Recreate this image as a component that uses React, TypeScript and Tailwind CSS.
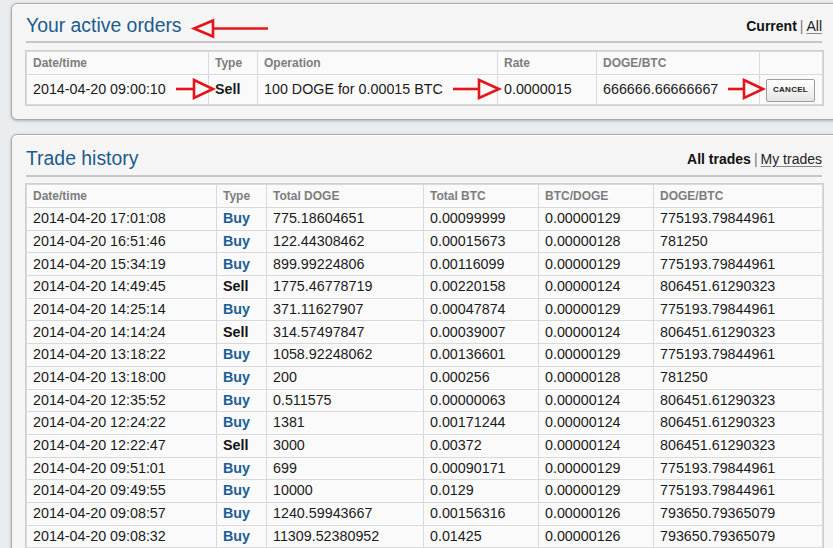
import React from "react";

type Trade = [string, "Buy" | "Sell", string, string, string, string];

const trades: Trade[] = [
  ["2014-04-20 17:01:08", "Buy", "775.18604651", "0.00099999", "0.00000129", "775193.79844961"],
  ["2014-04-20 16:51:46", "Buy", "122.44308462", "0.00015673", "0.00000128", "781250"],
  ["2014-04-20 15:34:19", "Buy", "899.99224806", "0.00116099", "0.00000129", "775193.79844961"],
  ["2014-04-20 14:49:45", "Sell", "1775.46778719", "0.00220158", "0.00000124", "806451.61290323"],
  ["2014-04-20 14:25:14", "Buy", "371.11627907", "0.00047874", "0.00000129", "775193.79844961"],
  ["2014-04-20 14:14:24", "Sell", "314.57497847", "0.00039007", "0.00000124", "806451.61290323"],
  ["2014-04-20 13:18:22", "Buy", "1058.92248062", "0.00136601", "0.00000129", "775193.79844961"],
  ["2014-04-20 13:18:00", "Buy", "200", "0.000256", "0.00000128", "781250"],
  ["2014-04-20 12:35:52", "Buy", "0.511575", "0.00000063", "0.00000124", "806451.61290323"],
  ["2014-04-20 12:24:22", "Buy", "1381", "0.00171244", "0.00000124", "806451.61290323"],
  ["2014-04-20 12:22:47", "Sell", "3000", "0.00372", "0.00000124", "806451.61290323"],
  ["2014-04-20 09:51:01", "Buy", "699", "0.00090171", "0.00000129", "775193.79844961"],
  ["2014-04-20 09:49:55", "Buy", "10000", "0.0129", "0.00000129", "775193.79844961"],
  ["2014-04-20 09:08:57", "Buy", "1240.59943667", "0.00156316", "0.00000126", "793650.79365079"],
  ["2014-04-20 09:08:32", "Buy", "11309.52380952", "0.01425", "0.00000126", "793650.79365079"],
];

const th = "border border-[#d9d9d9] px-[6px] text-left align-middle text-[12px] font-bold text-[#7d7d7d]";
const td = "border border-[#d9d9d9] px-[6px] text-left align-middle text-[14.3px] text-[#1a1a1a] whitespace-nowrap";

function Arrow({ tail, tip, base, y, half }: { tail: number; tip: number; base: number; y: number; half: number }) {
  return (
    <g stroke="#e3141b" strokeWidth={2.6} fill="none" strokeLinejoin="miter">
      <line x1={tail} y1={y} x2={base} y2={y} />
      <polygon points={`${base},${y - half} ${tip},${y} ${base},${y + half}`} />
    </g>
  );
}

export default function App() {
  return (
    <div className="relative w-[833px] h-[548px] overflow-hidden bg-[#e9edf0] pl-[11px] pt-[3px] font-['Liberation_Sans',Arial,sans-serif]">
      <div className="flex flex-col gap-[14px]">
        {/* Active orders panel */}
        <div className="w-[840px] rounded-[6px] border border-[#aaaaaa] bg-[#f5f5f5] pl-[14px] pt-[10px] pb-[14px] shadow-[0_1px_3px_rgba(0,0,0,0.25),inset_0_1px_0_#ffffff]">
          <div className="w-[796px]">
            <div className="flex items-end justify-between border-b-2 border-[#c6c6c6] pb-[5px]">
              <h2 className="text-[19.4px] leading-[22px] text-[#1c5b8d] font-normal">Your active orders</h2>
              <div className="text-[14px] leading-[18px] text-[#222] mb-[1px]">
                <span className="font-bold text-[#111]">Current</span>
                <span className="text-[#777] px-[3px]">|</span>
                <span className="underline decoration-[#888] underline-offset-2">All</span>
              </div>
            </div>
            <table className="mt-[8px] w-[796px] table-fixed border-collapse bg-[#fafafa] outline outline-1 outline-[#cfcfcf]">
              <colgroup>
                <col className="w-[182px]" />
                <col className="w-[49px]" />
                <col className="w-[240px]" />
                <col className="w-[99px]" />
                <col className="w-[163px]" />
                <col className="w-[63px]" />
              </colgroup>
              <thead>
                <tr className="h-[23px]">
                  <th className={th}>Date/time</th>
                  <th className={th}>Type</th>
                  <th className={th}>Operation</th>
                  <th className={th}>Rate</th>
                  <th className={th}>DOGE/BTC</th>
                  <th className={th}></th>
                </tr>
              </thead>
              <tbody>
                <tr className="h-[30px]">
                  <td className={td}>2014-04-20 09:00:10</td>
                  <td className={td + " font-bold"}>Sell</td>
                  <td className={td}>100 DOGE for 0.00015 BTC</td>
                  <td className={td}>0.0000015</td>
                  <td className={td}>666666.66666667</td>
                  <td className={td}>
                    <button className="h-[23px] w-[49px] rounded-[2px] border border-[#9c9c9c] bg-gradient-to-b from-[#ffffff] to-[#e6e6e6] text-[8px] font-bold tracking-[0.3px] text-[#222] shadow-[inset_0_1px_0_#fff]">
                      CANCEL
                    </button>
                  </td>
                </tr>
              </tbody>
            </table>
          </div>
        </div>

        {/* Trade history panel */}
        <div className="w-[840px] rounded-[6px] border border-[#aaaaaa] bg-[#f5f5f5] pl-[14px] pt-[12px] pb-[14px] shadow-[0_1px_3px_rgba(0,0,0,0.25),inset_0_1px_0_#ffffff]">
          <div className="w-[796px]">
            <div className="flex items-end justify-between border-b-2 border-[#c6c6c6] pb-[6px]">
              <h2 className="text-[19.4px] leading-[22px] text-[#1c5b8d] font-normal">Trade history</h2>
              <div className="text-[14px] leading-[18px] text-[#222] mb-[1px]">
                <span className="font-bold text-[#111]">All trades</span>
                <span className="text-[#777] px-[3px]">|</span>
                <span className="underline decoration-[#888] underline-offset-2">My trades</span>
              </div>
            </div>
            <table className="mt-[7px] w-[796px] table-fixed border-collapse bg-[#fafafa] outline outline-1 outline-[#cfcfcf]">
              <colgroup>
                <col className="w-[190px]" />
                <col className="w-[50px]" />
                <col className="w-[157px]" />
                <col className="w-[115px]" />
                <col className="w-[115px]" />
                <col className="w-[169px]" />
              </colgroup>
              <thead>
                <tr className="h-[23px]">
                  <th className={th}>Date/time</th>
                  <th className={th}>Type</th>
                  <th className={th}>Total DOGE</th>
                  <th className={th}>Total BTC</th>
                  <th className={th}>BTC/DOGE</th>
                  <th className={th}>DOGE/BTC</th>
                </tr>
              </thead>
              <tbody>
                {trades.map((t, i) => (
                  <tr key={i} className="h-[22.7px]">
                    <td className={td}>{t[0]}</td>
                    <td className={td + (t[1] === "Buy" ? " font-bold text-[#1b5e94]" : " font-bold text-[#111]")}>{t[1]}</td>
                    <td className={td}>{t[2]}</td>
                    <td className={td}>{t[3]}</td>
                    <td className={td}>{t[4]}</td>
                    <td className={td}>{t[5]}</td>
                  </tr>
                ))}
                <tr className="h-[22.7px]">
                  <td className={td}></td>
                  <td className={td}></td>
                  <td className={td}></td>
                  <td className={td}></td>
                  <td className={td}></td>
                  <td className={td}></td>
                </tr>
              </tbody>
            </table>
          </div>
        </div>
      </div>

      {/* Red annotation arrows */}
      <svg className="pointer-events-none absolute left-0 top-0" width={833} height={548} viewBox="0 0 833 548">
        <Arrow tail={268} tip={194} base={213} y={28.5} half={8} />
        <Arrow tail={176} tip={213} base={194} y={89} half={9} />
        <Arrow tail={453} tip={499} base={479} y={89} half={9} />
        <Arrow tail={728} tip={763} base={744} y={89} half={9} />
      </svg>
    </div>
  );
}
